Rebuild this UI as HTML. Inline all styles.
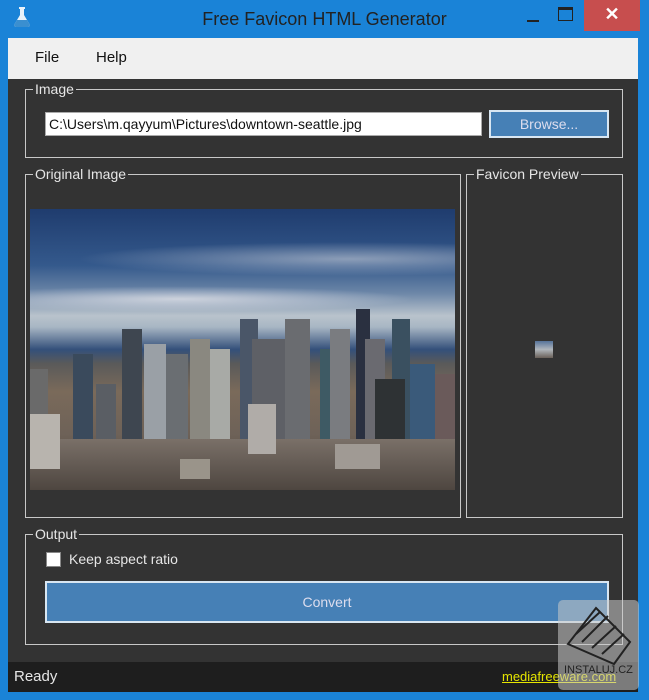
<!DOCTYPE html>
<html><head><meta charset="utf-8"><style>
*{margin:0;padding:0;box-sizing:border-box}
body{width:649px;height:700px;background:#1a83d7;position:relative;overflow:hidden;font-family:"Liberation Sans",sans-serif}
.a{position:absolute}
.title{left:0;width:649px;top:9px;text-align:center;font-size:18px;color:#222}
.menu{left:8px;top:38px;width:630px;height:41px;background:#f0f0f0;font-size:15px;color:#111}
.client{left:8px;top:79px;width:630px;height:583px;background:#333}
.status{left:8px;top:662px;width:630px;height:30px;background:#1e1e1e}
.box{border:1px solid #c8c8c8}
.lbl{background:#333;color:#e6e6e6;font-size:14px;padding:0 2px;line-height:16px}
.btn{background:#4680b6;color:#dde;font-size:14px;text-align:center;border:2px solid #d8e6f2}
.b{position:absolute;bottom:0}
</style></head><body>
<svg class="a" style="left:10px;top:5px" width="24" height="24" viewBox="0 0 24 24"><path d="M9 2h6v2h-1v6l6 10c0 1-1 2-2 2H6c-1 0-2-1-2-2l6-10V4H9z" fill="#e8f2fa"/><path d="M7 15h10l3 5c0 1-1 2-2 2H6c-1 0-2-1-2-2z" fill="#3a8fd0"/></svg>
<div class="a title">Free Favicon HTML Generator</div>
<div class="a" style="left:527px;top:20px;width:12px;height:2px;background:#222"></div>
<div class="a" style="left:558px;top:7px;width:15px;height:14px;border:1px solid #222;border-top:3px solid #222"></div>
<div class="a" style="left:584px;top:0;width:56px;height:31px;background:#c74e4e;color:#fff;font-size:18px;text-align:center;line-height:28px;font-weight:bold">✕</div>
<div class="a menu"><span class="a" style="left:27px;top:11px">File</span><span class="a" style="left:88px;top:11px">Help</span></div>
<div class="a client"></div>
<div class="a box" style="left:25px;top:89px;width:598px;height:69px"></div>
<div class="a lbl" style="left:33px;top:81px">Image</div>
<div class="a" style="left:45px;top:112px;width:437px;height:24px;background:#fff;border:1px solid #aaa;font-size:14px;line-height:22px;padding-left:3px;color:#111">C:\Users\m.qayyum\Pictures\downtown-seattle.jpg</div>
<div class="a btn" style="left:489px;top:110px;width:120px;height:28px;line-height:24px">Browse...</div>
<div class="a box" style="left:25px;top:174px;width:436px;height:344px"></div>
<div class="a lbl" style="left:33px;top:166px">Original Image</div>
<div class="a box" style="left:466px;top:174px;width:157px;height:344px"></div>
<div class="a lbl" style="left:474px;top:166px">Favicon Preview</div>
<div class="a" style="left:30px;top:209px;width:425px;height:281px;overflow:hidden;background:linear-gradient(#1f3c6e 0%,#34598c 20%,#6d87a8 30%,#b9c3cc 38%,#a8b6c4 42%,#34507a 50%,#5a5a5a 55%,#7a6a5a 65%,#6e6258 80%,#4a4038 100%)">
<div class="a" style="left:0;top:30px;width:425px;height:40px;background:radial-gradient(ellipse at 75% 50%,rgba(200,205,215,.6),transparent 60%)"></div>
<div class="a" style="left:0;top:75px;width:425px;height:30px;background:radial-gradient(ellipse at 35% 50%,rgba(230,230,235,.75),transparent 60%)"></div>
<div style="position:absolute;left:0;top:0;width:425px;height:240px">
<div class="b" style="left:0;width:18px;height:80px;background:#6a6a6a"></div>
<div class="b" style="left:43px;width:20px;height:95px;background:#3a4a5c"></div>
<div class="b" style="left:66px;width:20px;height:65px;background:#5a5e64"></div>
<div class="b" style="left:92px;width:20px;height:120px;background:#3e4650"></div>
<div class="b" style="left:114px;width:22px;height:105px;background:#9aa0a6"></div>
<div class="b" style="left:136px;width:22px;height:95px;background:#6a6e72"></div>
<div class="b" style="left:160px;width:20px;height:110px;background:#8a8880"></div>
<div class="b" style="left:180px;width:20px;height:100px;background:#a8aaa6"></div>
<div class="b" style="left:210px;width:18px;height:130px;background:#4a5668"></div>
<div class="b" style="left:222px;width:35px;height:110px;background:#5e6066"></div>
<div class="b" style="left:255px;width:25px;height:130px;background:#6a6c70"></div>
<div class="b" style="left:290px;width:18px;height:100px;background:#3e5a64"></div>
<div class="b" style="left:300px;width:20px;height:120px;background:#7a7c80"></div>
<div class="b" style="left:326px;width:14px;height:140px;background:#2a3040"></div>
<div class="b" style="left:335px;width:20px;height:110px;background:#6a6a70"></div>
<div class="b" style="left:362px;width:18px;height:130px;background:#3a5060"></div>
<div class="b" style="left:345px;width:30px;height:70px;background:#2e3234"></div>
<div class="b" style="left:380px;width:25px;height:85px;background:#3a5a7a"></div>
<div class="b" style="left:405px;width:20px;height:75px;background:#6a5a5a"></div>
</div>
<div class="a" style="left:0;top:230px;width:425px;height:51px;background:linear-gradient(#7a7068,#4e4640)"></div>
<div class="a" style="left:0;top:205px;width:30px;height:55px;background:#b8b4ae"></div>
<div class="a" style="left:218px;top:195px;width:28px;height:50px;background:#b0aca8"></div>
<div class="a" style="left:305px;top:235px;width:45px;height:25px;background:#a09a94"></div>
<div class="a" style="left:150px;top:250px;width:30px;height:20px;background:#9a948a"></div>
</div>
<div class="a" style="left:535px;top:341px;width:18px;height:17px;background:linear-gradient(#56739a,#b0b6bc 50%,#6a6058)"></div>
<div class="a box" style="left:25px;top:534px;width:598px;height:111px"></div>
<div class="a lbl" style="left:33px;top:526px">Output</div>
<div class="a" style="left:46px;top:552px;width:15px;height:15px;background:#fff;border:1px solid #888"></div>
<div class="a" style="left:69px;top:551px;font-size:14px;color:#e6e6e6">Keep aspect ratio</div>
<div class="a btn" style="left:45px;top:581px;width:564px;height:42px;line-height:38px">Convert</div>
<div class="a status"><span class="a" style="left:6px;top:6px;color:#e6e6e6;font-size:15px">Ready</span><span class="a" style="left:494px;top:7px;color:#e6e600;font-size:13px;text-decoration:underline">mediafreeware.com</span></div>
<div class="a" style="left:558px;top:600px;width:81px;height:90px;background:rgba(200,200,200,.55);border-radius:5px">
<svg class="a" style="left:4px;top:4px" width="74" height="64" viewBox="0 0 74 64" fill="none" stroke="#222" stroke-width="2"><path d="M34 4L68 38 52 60 6 40z"/><path d="M14 30l24-22M20 38l26-26M30 44l24-22M40 50l22-20"/></svg>
<div class="a" style="left:6px;top:64px;font-size:11px;color:#222">INSTALUJ.CZ</div></div>
</body></html>
